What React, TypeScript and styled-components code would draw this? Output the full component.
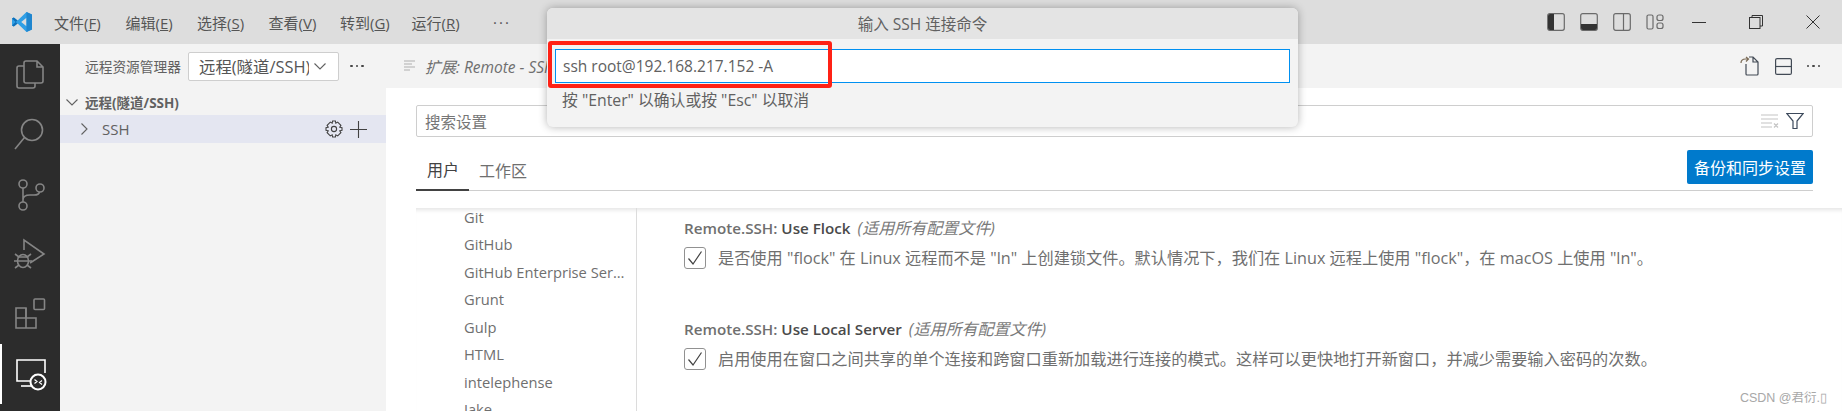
import { FC } from "react";
import styled, { createGlobalStyle } from "styled-components";

const FONT = `"Open Sans", "Noto Sans CJK SC", sans-serif`;

const Global = createGlobalStyle`
  html, body { margin: 0; padding: 0; background: #fff; }
  body { font-family: ${FONT}; overflow: hidden; }
  * { box-sizing: border-box; }
`;

const Page = styled.div`
  position: relative;
  width: 1842px;
  height: 411px;
  overflow: hidden;
  display: flex;
  flex-direction: column;
  color: #616161;
`;

/* title bar */
const TitleBar = styled.div`
  height: 44px;
  flex: none;
  background: #dddddd;
  display: flex;
  align-items: center;
`;
const Logo = styled.svg`
  width: 22px;
  height: 22px;
  margin-left: 11px;
  margin-right: 21px;
`;
const Menu = styled.div`
  display: flex;
  gap: 21.5px;
  font-size: 15px;
  color: #555;
  align-items: center;
  span { white-space: nowrap; width: 50px; }
  b { font-weight: 400; letter-spacing: 2px; margin-left: 10px; }
`;
const LayoutIcons = styled.div`
  margin-left: auto;
  display: flex;
  align-items: center;
  gap: 15px;
  margin-right: 6px;
`;
const WindowButtons = styled.div`
  display: flex;
  align-items: center;
  gap: 43px;
  margin-right: 22px;
  margin-left: 22px;
`;

/* main area */
const Body = styled.div`
  flex: 1;
  display: flex;
  min-height: 0;
`;
const ActivityBar = styled.div`
  width: 60px;
  flex: none;
  background: #2c2c2c;
  display: flex;
  flex-direction: column;
`;
const ActivityItem = styled.div<{ $active?: boolean }>`
  height: 60px;
  display: flex;
  align-items: center;
  justify-content: center;
  border-left: 2px solid ${(p) => (p.$active ? "#fff" : "transparent")};
  padding-right: 2px;
`;

/* sidebar */
const SideBar = styled.div`
  width: 326px;
  flex: none;
  background: #f3f3f3;
`;
const SideHeader = styled.div`
  height: 44px;
  display: flex;
  align-items: center;
  padding-left: 25px;
`;
const SideTitle = styled.div`
  font-size: 13.7px;
  width: 103px;
  white-space: nowrap;
`;
const Select = styled.div`
  width: 151px;
  height: 29px;
  background: #fff;
  border: 1px solid #cecece;
  border-radius: 2px;
  display: flex;
  align-items: center;
  padding-left: 10px;
  font-size: 16.4px;
  color: #555;
  span { width: 110px; flex: none; margin-right: 4px; overflow-x: clip; white-space: nowrap; }
`;
const Dots = styled.div<{ $left?: number }>`
  display: flex;
  gap: 3px;
  margin-left: ${(p) => p.$left ?? 0}px;
  i { width: 2.5px; height: 2.5px; background: #444; border-radius: 50%; }
`;
const SectionHead = styled.div`
  height: 27px;
  display: flex;
  align-items: center;
  padding-left: 5px;
  gap: 6px;
  font-size: 13.5px;
  font-weight: 700;
  color: #616161;
`;
const TreeRow = styled.div`
  height: 28px;
  background: #e4e6f1;
  display: flex;
  align-items: center;
  padding-left: 17px;
  font-size: 15px;
  color: #616161;
  gap: 11px;
`;
const RowActions = styled.div`
  margin-left: auto;
  display: flex;
  align-items: center;
  gap: 7px;
  padding-right: 19px;
`;

/* editor */
const Editor = styled.div`
  flex: 1;
  min-width: 0;
  background: #fff;
  display: flex;
  flex-direction: column;
`;
const TabBar = styled.div`
  height: 44px;
  flex: none;
  background: #f3f3f3;
  display: flex;
  align-items: center;
  padding-left: 18px;
  padding-right: 22px;
  gap: 9px;
`;
const TabLabel = styled.div`
  font-size: 15.5px;
  font-style: italic;
  color: #6f6f6f;
  white-space: nowrap;
`;
const TabActions = styled.div`
  margin-left: auto;
  display: flex;
  align-items: center;
  gap: 15px;
`;
const SearchBox = styled.div`
  margin: 17px 29px 0 30px;
  height: 32px;
  flex: none;
  border: 1px solid #cecece;
  border-radius: 2px;
  display: flex;
  align-items: center;
  padding: 0 8px;
  font-size: 15.5px;
  color: #767676;
  gap: 7px;
  span { margin-right: auto; }
`;
const TabsRow = styled.div`
  margin: 13px 29px 0 30px;
  height: 41px;
  flex: none;
  border-bottom: 1px solid #cecece;
  display: flex;
  align-items: center;
`;
const SettingTab = styled.div<{ $active?: boolean }>`
  height: 41px;
  width: ${(p) => (p.$active ? 53 : 63)}px;
  padding: 0 0 0 ${(p) => (p.$active ? 11 : 10)}px;
  display: flex;
  align-items: center;
  font-size: 16px;
  color: ${(p) => (p.$active ? "#424242" : "#6f6f6f")};
  border-bottom: ${(p) => (p.$active ? "2px solid #424242" : "none")};
`;
const SyncButton = styled.div`
  margin-left: auto;
  margin-bottom: 6px;
  width: 126px;
  height: 34px;
  background: #007acc;
  border-radius: 2px;
  color: #fff;
  font-size: 16px;
  display: flex;
  align-items: center;
  justify-content: center;
`;
const SettingsBody = styled.div`
  flex: 1;
  min-height: 0;
  margin: 17px 0 0 30px;
  display: flex;
  overflow: hidden;
  box-shadow: inset 0 5px 4px -3px #e4e4e4;
`;
const TocColumn = styled.div`
  width: 221px;
  flex: none;
  margin-top: -1.5px;
  padding: 0 0 0 48px;
  border-right: 1px solid #dcdcdc;
`;
const TocItem = styled.div`
  height: 27.5px;
  line-height: 20px;
  font-size: 14.7px;
  color: #6f6f6f;
  white-space: nowrap;
  width: 167px;
  overflow: hidden;
  text-overflow: ellipsis;
`;
const SettingsColumn = styled.div`
  padding: 10px 0 0 47px;
`;
const Setting = styled.div`
  height: 101px;
`;
const SettingTitle = styled.div`
  font-size: 15.2px;
  line-height: 20px;
  color: #6f6f6f;
  font-weight: 600;
  white-space: nowrap;
  b { color: #4a4a4a; font-weight: 600; }
  em { color: #7a7a7a; font-weight: 400; font-size: 16px; margin-left: 7px; }
`;
const SettingLine = styled.div`
  display: flex;
  align-items: center;
  margin-top: 9px;
  gap: 12px;
  font-size: 16.2px;
  line-height: 22px;
  color: #6f6f6f;
  white-space: nowrap;
`;
const CheckBox = styled.div`
  width: 22px;
  height: 22px;
  flex: none;
  border: 1px solid #919191;
  border-radius: 3px;
  display: flex;
  align-items: center;
  justify-content: center;
`;

/* quick input, lies over the page */
const QuickInput = styled.div`
  position: absolute;
  left: 547px;
  top: 8px;
  width: 751px;
  height: 119px;
  background: #f3f3f3;
  border-radius: 6px;
  box-shadow: 0 0 8px rgba(0, 0, 0, 0.3);
  overflow: hidden;
`;
const QuickTitle = styled.div`
  height: 31px;
  background: #e4e4e4;
  display: flex;
  align-items: center;
  justify-content: center;
  font-size: 15.5px;
  color: #616161;
`;
const QuickField = styled.div`
  margin: 10px 8px 0;
  height: 34px;
  background: #fff;
  border: 1px solid #0090f1;
  display: flex;
  align-items: center;
  padding-left: 7px;
  font-size: 15.5px;
  color: #616161;
`;
const QuickHint = styled.div`
  margin: 5px 0 0 15px;
  font-size: 15.8px;
  color: #616161;
`;
const RedMark = styled.div`
  position: absolute;
  left: 548px;
  top: 41px;
  width: 284px;
  height: 47px;
  border: 4px solid #ff2115;
  border-radius: 3px;
`;
const Watermark = styled.div`
  position: absolute;
  right: 15px;
  top: 387px;
  font-family: "Liberation Sans", "Noto Sans CJK SC", sans-serif;
  font-size: 12.5px;
  color: #a8a8a8;
  white-space: nowrap;
`;

const VSCodeLogo: FC = () => (
  <Logo viewBox="0 0 22 22">
    <path d="M15.5 1 L21 3.6 V18.4 L15.5 21 L6.6 12.6 L2.8 15.6 L1 14.6 V7.4 L2.8 6.4 L6.6 9.4 Z M15.5 6.8 L10.2 11 L15.5 15.2 Z" fill="#2f9fe6" fillRule="evenodd" />
    <path d="M15.5 1 L21 3.6 V18.4 L15.5 21 Z M15.5 6.8 V15.2 L15.5 15.2 Z" fill="#1f86cf" />
    <path d="M1 7.4 L2.8 6.4 L6.6 9.4 L4.6 11 Z M1 14.6 L2.8 15.6 L6.6 12.6 L4.6 11 Z" fill="#0f6fb8" />
  </Logo>
);

const Stroke: FC<{ size?: number; color?: string; w?: number; children: React.ReactNode; vb?: number }> = ({ size = 36, color = "#858585", w = 1.6, children, vb }) => (
  <svg width={size} height={size} viewBox={`0 0 ${vb ?? size} ${vb ?? size}`} fill="none" stroke={color} strokeWidth={w}>
    {children}
  </svg>
);

const Chevron: FC<{ dir: "down" | "right"; size?: number }> = ({ dir, size = 14 }) => (
  <Stroke size={size} vb={14} color="#616161" w={1.1}>
    {dir === "down" ? <path d="M1.5 4.5 L7 10 L12.5 4.5" /> : <path d="M4.5 1.5 L10 7 L4.5 12.5" />}
  </Stroke>
);

const menuItems: [string, string][] = [
  ["文件", "F"],
  ["编辑", "E"],
  ["选择", "S"],
  ["查看", "V"],
  ["转到", "G"],
  ["运行", "R"],
];

const tocItems = ["Git", "GitHub", "GitHub Enterprise Server...", "Grunt", "Gulp", "HTML", "intelephense", "Jake"];

const App: FC = () => (
  <Page>
    <Global />
    <TitleBar>
      <VSCodeLogo />
      <Menu>
        {menuItems.map(([name, key]) => (
          <span key={name}>
            {name}(<u>{key}</u>)
          </span>
        ))}
        <b>···</b>
      </Menu>
      <LayoutIcons>
        <svg width="18" height="18" viewBox="0 0 18 18">
          <rect x="0.7" y="0.7" width="16.6" height="16.6" rx="2" fill="none" stroke="#6a6a6a" strokeWidth="1.2" />
          <path d="M1 3 a2 2 0 0 1 2 -2 H7 V17 H3 a2 2 0 0 1 -2 -2 Z" fill="#333" />
        </svg>
        <svg width="18" height="18" viewBox="0 0 18 18">
          <rect x="0.7" y="0.7" width="16.6" height="16.6" rx="2" fill="none" stroke="#6a6a6a" strokeWidth="1.2" />
          <path d="M1 11 H17 V15 a2 2 0 0 1 -2 2 H3 a2 2 0 0 1 -2 -2 Z" fill="#333" />
        </svg>
        <svg width="18" height="18" viewBox="0 0 18 18" fill="none" stroke="#6a6a6a" strokeWidth="1.2">
          <rect x="0.7" y="0.7" width="16.6" height="16.6" rx="2" />
          <path d="M10.5 1 V17" />
        </svg>
        <svg width="18" height="18" viewBox="0 0 18 18" fill="none" stroke="#6a6a6a" strokeWidth="1.2">
          <rect x="1" y="2" width="6" height="14" rx="1.5" />
          <rect x="11" y="2" width="6" height="5.5" rx="2" />
          <rect x="11" y="10" width="6" height="5.5" rx="2" />
        </svg>
      </LayoutIcons>
      <WindowButtons>
        <svg width="14" height="14" viewBox="0 0 14 14" stroke="#333" strokeWidth="1"><path d="M0 7.5 H14" /></svg>
        <svg width="14" height="14" viewBox="0 0 14 14" fill="none" stroke="#333" strokeWidth="1">
          <rect x="0.5" y="2.5" width="10.5" height="11" />
          <path d="M3 2.5 V0.5 H13.5 V11 H11" />
        </svg>
        <svg width="14" height="14" viewBox="0 0 14 14" stroke="#333" strokeWidth="1"><path d="M0.5 0.5 L13.5 13.5 M13.5 0.5 L0.5 13.5" /></svg>
      </WindowButtons>
    </TitleBar>
    <Body>
      <ActivityBar>
        <ActivityItem>
          <Stroke>
            <path d="M14 5 H25 L31 11 V25 Q31 27 29 27 H14 Q12 27 12 25 V7 Q12 5 14 5 Z M25 5 V11 H31" />
            <path d="M12 10 H7 Q5 10 5 12 V30 Q5 32 7 32 H21 Q23 32 23 30 V27" />
          </Stroke>
        </ActivityItem>
        <ActivityItem>
          <Stroke>
            <circle cx="20" cy="14" r="10.5" />
            <path d="M12.5 21.5 L3 33" />
          </Stroke>
        </ActivityItem>
        <ActivityItem>
          <Stroke>
            <circle cx="11" cy="8" r="4" />
            <circle cx="11" cy="30" r="4" />
            <circle cx="28" cy="12" r="4" />
            <path d="M11 12 V26 M11 24 Q11 19 18 19 H22 Q27 19 27.5 16" />
          </Stroke>
        </ActivityItem>
        <ActivityItem>
          <Stroke>
            <path d="M12 14 V4 L32 18 L18 27" />
            <ellipse cx="11" cy="25" rx="5.5" ry="6.5" />
            <path d="M5.5 21 H16.5 M2 25 H20 M3 18 L7 21 M19 18 L15 21 M3 32 L7 29 M19 32 L15 29" />
          </Stroke>
        </ActivityItem>
        <ActivityItem>
          <Stroke>
            <path d="M4 12 H14 V32 H4 Z M4 22 H24 V32 H14" />
            <path d="M14 22 V12" />
            <rect x="22" y="3" width="10.5" height="10.5" rx="1" />
          </Stroke>
        </ActivityItem>
        <ActivityItem $active>
          <Stroke color="#ffffff">
            <path d="M21 25 H5 V4 H33 V17" />
            <path d="M9 30 H21" />
            <circle cx="26" cy="26" r="7.5" fill="#2c2c2c" strokeWidth="2" />
            <path d="M22.5 27.5 L25 25.5 L22.5 23.5 M30 24.5 L27.5 26.5 L30 28.5" strokeWidth="1.2" />
          </Stroke>
        </ActivityItem>
      </ActivityBar>
      <SideBar>
        <SideHeader>
          <SideTitle>远程资源管理器</SideTitle>
          <Select>
            <span>远程(隧道/SSH)</span>
            <Chevron dir="down" />
          </Select>
          <Dots $left={11}><i /><i /><i /></Dots>
        </SideHeader>
        <SectionHead>
          <Chevron dir="down" />
          远程(隧道/SSH)
        </SectionHead>
        <TreeRow>
          <Chevron dir="right" />
          SSH
          <RowActions>
            <svg width="18" height="18" viewBox="0 0 18 18" fill="none" stroke="#424242" strokeWidth="1.1">
              <circle cx="9" cy="9" r="2.6" />
              <path d="M7.6 1 H10.4 L10.8 3.2 L12.7 2.1 L15.9 5.3 L14.8 7.2 L17 7.6 V10.4 L14.8 10.8 L15.9 12.7 L12.7 15.9 L10.8 14.8 L10.4 17 H7.6 L7.2 14.8 L5.3 15.9 L2.1 12.7 L3.2 10.8 L1 10.4 V7.6 L3.2 7.2 L2.1 5.3 L5.3 2.1 L7.2 3.2 Z" />
            </svg>
            <svg width="17" height="17" viewBox="0 0 17 17" stroke="#424242" strokeWidth="1.1"><path d="M8.5 0 V17 M0 8.5 H17" /></svg>
          </RowActions>
        </TreeRow>
      </SideBar>
      <Editor>
        <TabBar>
          <svg width="12" height="12" viewBox="0 0 12 12" stroke="#b0b0b0" strokeWidth="1.2"><path d="M0 1 H11 M0 4 H8 M0 7 H11 M0 10 H6" /></svg>
          <TabLabel>扩展: Remote - SSH</TabLabel>
          <TabActions>
            <svg width="20" height="20" viewBox="0 0 20 20" fill="none" stroke="#424a55" strokeWidth="1.2">
              <path d="M6 8 V18 Q6 19 7 19 H17 Q18 19 18 18 V6 L13 1 H9 M13 1 V6 H18" />
              <path d="M1 7 Q1 3 5.5 3 H8 M6 1 L8.5 3 L6 5.5" stroke="#7a6a55" />
            </svg>
            <svg width="17" height="17" viewBox="0 0 17 17" fill="none" stroke="#424a55" strokeWidth="1.2">
              <rect x="0.6" y="0.6" width="15.8" height="15.8" rx="1.5" />
              <path d="M1 8.5 H16" />
            </svg>
            <Dots><i /><i /><i /></Dots>
          </TabActions>
        </TabBar>
        <SearchBox>
          <span>搜索设置</span>
          <svg width="18" height="14" viewBox="0 0 18 14" stroke="#c4c4c4" strokeWidth="1.2" fill="none">
            <path d="M0 1 H17 M0 5 H17 M0 9 H11 M0 13 H11 M13 9.5 L17 13.5 M17 9.5 L13 13.5" />
          </svg>
          <svg width="18" height="18" viewBox="0 0 18 18" fill="none" stroke="#3d4a5c" strokeWidth="1.2">
            <path d="M0.8 1.5 H17.2 L11 9 V16.5 H7 V9 Z" />
          </svg>
        </SearchBox>
        <TabsRow>
          <SettingTab $active>用户</SettingTab>
          <SettingTab>工作区</SettingTab>
          <SyncButton>备份和同步设置</SyncButton>
        </TabsRow>
        <SettingsBody>
          <TocColumn>
            {tocItems.map((t) => (
              <TocItem key={t}>{t}</TocItem>
            ))}
          </TocColumn>
          <SettingsColumn>
            <Setting>
              <SettingTitle>
                Remote.SSH: <b>Use Flock</b>
                <em>(适用所有配置文件)</em>
              </SettingTitle>
              <SettingLine>
                <CheckBox>
                  <svg width="16" height="16" viewBox="0 0 16 16" fill="none" stroke="#424242" strokeWidth="1.2"><path d="M1.5 8.5 L6 14 L14.5 1.5" /></svg>
                </CheckBox>
                是否使用 "flock" 在 Linux 远程而不是 "ln" 上创建锁文件。默认情况下，我们在 Linux 远程上使用 "flock"，在 macOS 上使用 "ln"。
              </SettingLine>
            </Setting>
            <Setting>
              <SettingTitle>
                Remote.SSH: <b>Use Local Server</b>
                <em>(适用所有配置文件)</em>
              </SettingTitle>
              <SettingLine>
                <CheckBox>
                  <svg width="16" height="16" viewBox="0 0 16 16" fill="none" stroke="#424242" strokeWidth="1.2"><path d="M1.5 8.5 L6 14 L14.5 1.5" /></svg>
                </CheckBox>
                启用使用在窗口之间共享的单个连接和跨窗口重新加载进行连接的模式。这样可以更快地打开新窗口，并减少需要输入密码的次数。
              </SettingLine>
            </Setting>
          </SettingsColumn>
        </SettingsBody>
      </Editor>
    </Body>
    <QuickInput>
      <QuickTitle>输入 SSH 连接命令</QuickTitle>
      <QuickField>ssh root@192.168.217.152 -A</QuickField>
      <QuickHint>按 "Enter" 以确认或按 "Esc" 以取消</QuickHint>
    </QuickInput>
    <RedMark />
    <Watermark>CSDN @君衍.▯</Watermark>
  </Page>
);

export default App;
